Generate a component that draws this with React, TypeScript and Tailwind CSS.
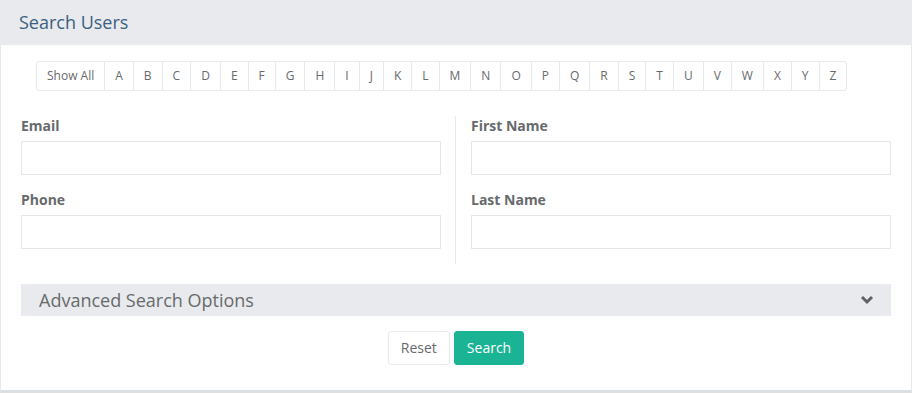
import React from "react";

const letters = "ABCDEFGHIJKLMNOPQRSTUVWXYZ".split("");

function Field({ label }: { label: string }) {
  return (
    <div className="mb-[15px]">
      <div className="h-[19px] leading-[20px] text-[14px] font-bold text-[#676a6c] mb-[6px]">{label}</div>
      <input className="block w-full h-[34px] border border-[#e5e6e7] bg-white outline-none" />
    </div>
  );
}

export default function App() {
  return (
    <div className="w-[913px] h-[394px] bg-white" style={{ fontFamily: '"Open Sans", sans-serif' }}>
      <div className="w-[912px] h-[393px] border border-[#e7eaec] border-b-[3px] border-b-[#dcdfe3] bg-white">
        <div className="h-[44px] bg-[#e8eaed] px-[18px] pt-[9px]">
          <div className="text-[18px] leading-[24px] text-[#3b5f82]">Search Users</div>
        </div>
        <div className="px-[20px] pt-[16px]">
          <div className="ml-[15px] inline-flex">
            {["Show All", ...letters].map((l, i) => (
              <div
                key={l}
                className={
                  "px-[10px] py-[5px] text-[12px] leading-[18px] text-[#676a6c] border-y border-r border-[#e7eaec] bg-white " +
                  (i === 0 ? "border-l rounded-l-[3px]" : "") +
                  (i === letters.length ? " rounded-r-[3px]" : "")
                }
              >
                {l}
              </div>
            ))}
          </div>
          <div className="flex mt-[25px]">
            <div className="flex-1">
              <Field label="Email" />
              <Field label="Phone" />
            </div>
            <div className="w-px bg-[#e7eaec] mx-[14px]" />
            <div className="flex-1 ml-[1px]">
              <Field label="First Name" />
              <Field label="Last Name" />
            </div>
          </div>
          <div className="mt-[20px] h-[32px] bg-[#e8eaed] flex items-center justify-between pl-[18px] pr-[17px]">
            <span className="text-[18px] leading-[24px] text-[#676a6c]">Advanced Search Options</span>
            <svg width="14" height="10" viewBox="0 0 14 10">
              <polyline points="2,2 7,7 12,2" fill="none" stroke="#5e6163" strokeWidth="3" />
            </svg>
          </div>
          <div className="flex justify-center gap-[4px] mt-[15px]">
            <button className="h-[34px] px-[12px] text-[14px] leading-[20px] text-[#676a6c] bg-white border border-[#e7eaec] rounded-[3px]">
              Reset
            </button>
            <button className="h-[34px] px-[12px] text-[14px] leading-[20px] text-white bg-[#1ab394] border border-[#1ab394] rounded-[3px]">
              Search
            </button>
          </div>
        </div>
      </div>
    </div>
  );
}
